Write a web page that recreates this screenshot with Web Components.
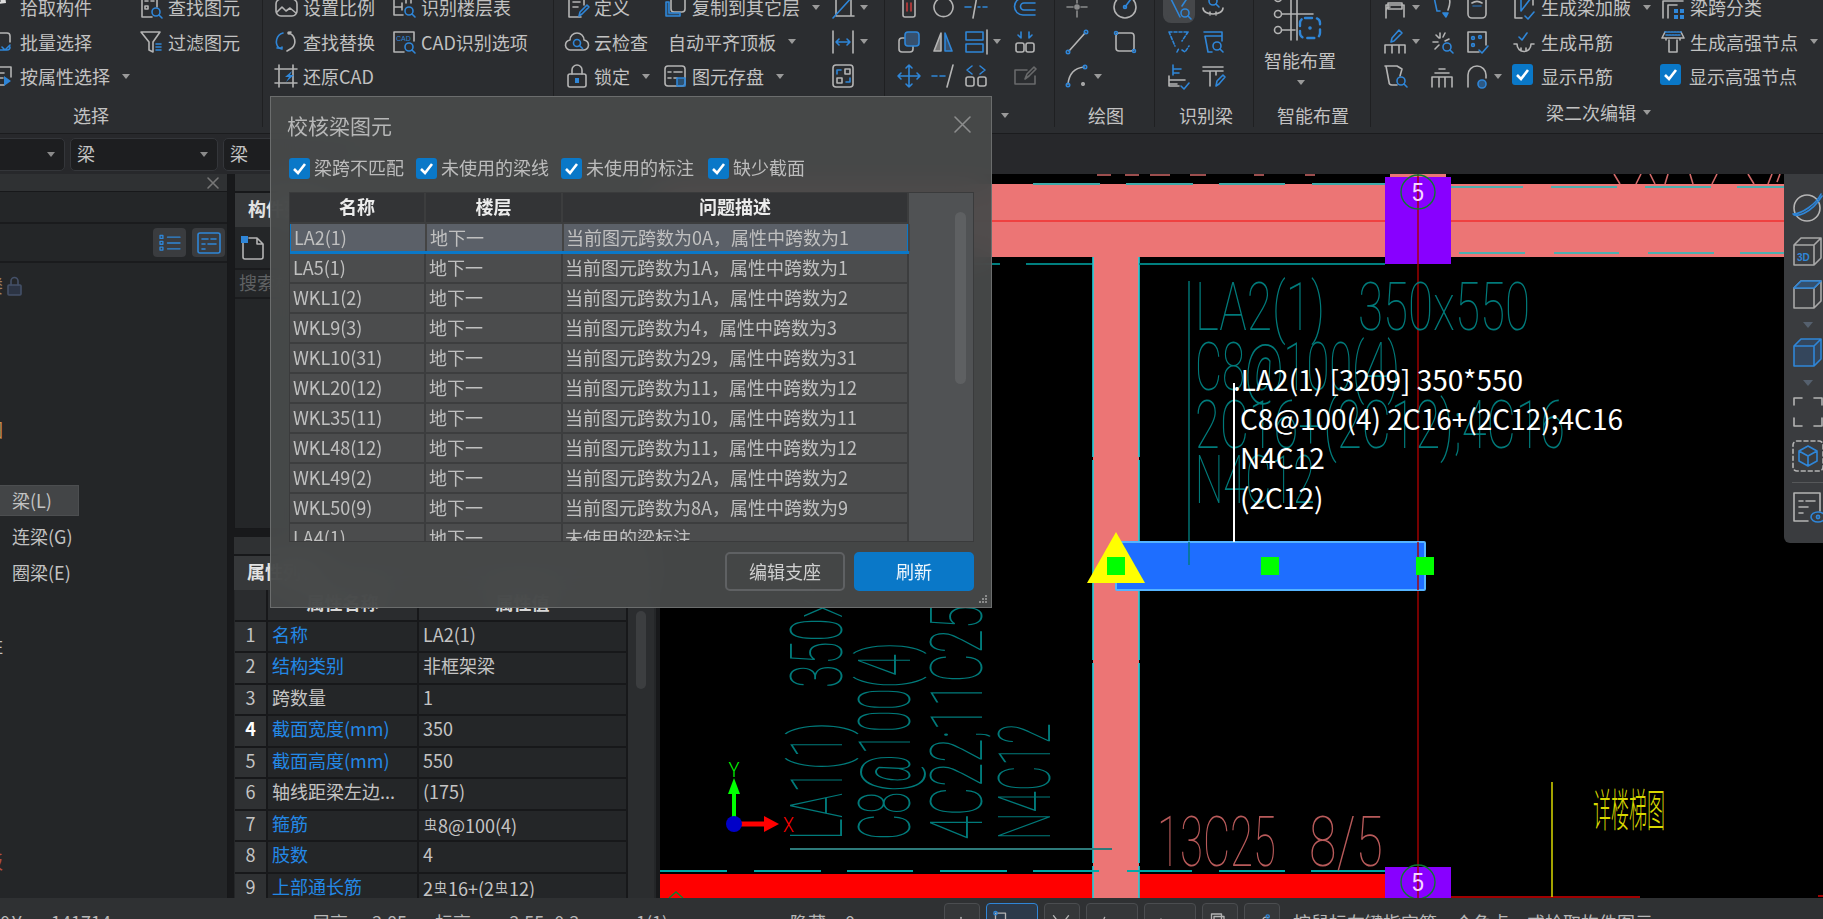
<!DOCTYPE html>
<html lang="zh">
<head>
<meta charset="utf-8">
<title>校核梁图元</title>
<style>
html,body{margin:0;padding:0}
body{width:1823px;height:919px;overflow:hidden;position:relative;display:flex;flex-direction:column;background:#18191b;color:#c4c4c4;font:18px "Noto Sans CJK SC","Liberation Sans",sans-serif}
.main{display:flex;height:724px}
.mid{display:flex;flex-direction:column;width:422px;margin-left:6px;margin-right:4px}
</style>
</head>
<body>
<gq-ribbon></gq-ribbon>
<gq-toolbar></gq-toolbar>
<div class="main">
  <gq-tree></gq-tree>
  <div class="mid">
    <gq-list-panel></gq-list-panel>
    <gq-prop-panel></gq-prop-panel>
  </div>
  <gq-canvas><gq-viewbar></gq-viewbar></gq-canvas>
</div>
<gq-status></gq-status>
<gq-dialog heading="校核梁图元">
  <gq-check slot="filters">梁跨不匹配</gq-check>
  <gq-check slot="filters">未使用的梁线</gq-check>
  <gq-check slot="filters">未使用的标注</gq-check>
  <gq-check slot="filters">缺少截面</gq-check>
  <gq-button slot="actions">编辑支座</gq-button>
  <gq-button slot="actions" primary>刷新</gq-button>
</gq-dialog>

<script>
const BLUE='#2f86d8';
const b=s=>`<g stroke="${BLUE}">${s}</g>`;
const mag=(x=17,y=17,r=4)=>b(`<circle cx="${x}" cy="${y}" r="${r}"/><path d="M${x+r-1} ${y+r-1}l3 3"/>`);
const svg=(s,w=24,h=24,vb='0 0 24 24')=>`<svg viewBox="${vb}" width="${w}" height="${h}" fill="none" stroke="#b4b4b4" stroke-width="1.6" stroke-linecap="round" stroke-linejoin="round" style="display:block;overflow:visible">${s}</svg>`;

// ribbon icons, one small drawing each
const ICONS={
  pick:`<path d="M2-4l8 8 4-4 1 8-8 1 3-3-8-8z" fill="#ddd" stroke="none"/>`,
  batch:`<path d="M9 3h7a3 3 0 0 1 3 3v6"/>`+b(`<path d="M9 20h7a3 3 0 0 0 3-3M11 17l3 3 5-5"/>`),
  attr:`<path d="M9 3h11v10M9 9h4M9 14h3M9 21h4"/>`+`<path d="M13 12l7 5-7 5z" fill="${BLUE}" stroke="none"/>`,
  find:`<path d="M13 22H3V2h15v10M6 6h3M12 6h3M6 11h3v3H6z"/>`+mag(),
  filter:`<path d="M2 2h19l-7 10v10l-4-2v-8z"/>`+b(`<path d="M17 14h5M17 17h5M17 20h5"/>`),
  scale:`<rect x="2" y="4" width="21" height="17" rx="5"/><path d="M3 17l5-5 4 4 4-3 6 5"/>`,
  floor:`<path d="M2 4h3M9 2h10v6M2 4v8h8V8M2 12v8h9M10 12v3M14 2v6"/>`+mag(17,16,4),
  replace:b(`<path d="M9 3a9 9 0 0 0-4 15l3 1"/><path d="M3 18h5v-1"/>`)+`<path d="M15 3a9 9 0 0 1 3 15l-5 3M15 3l2-1"/><circle cx="15" cy="3" r="1"/>`,
  cad:`<path d="M22 11V2H2v20h10"/><text x="4" y="11" font-size="7" fill="${BLUE}" stroke="none" style="font-family:'Liberation Sans',sans-serif">CAD</text>`+mag(17,17,4),
  restore:`<path d="M5 1v22M19 1v22M1 5h22M1 19h22"/>`+`<path d="M18 7l-7 6 4 0-3 5 8-7-4 0z" fill="${BLUE}" stroke="none"/>`,
  define:`<path d="M16 22H4V2h15v8M8 7h7M8 12h5"/>`+b(`<path d="M14 21l1-4 7-7 2 2-7 7z"/>`),
  cloud:`<path d="M6 20a5 5 0 0 1-1-10 7 7 0 0 1 14 0 5 5 0 0 1-1 10z"/>`+mag(12,13,3.5),
  lock:`<rect x="3" y="10" width="18" height="13" rx="2"/><path d="M7 10V6a5 5 0 0 1 10 0v4"/>`+`<rect x="10" y="14" width="4" height="5" fill="${BLUE}" stroke="none"/>`,
  copy:`<rect x="8" y="1" width="14" height="16" rx="3"/>`+b(`<path d="M6 7H3v14h14v-3H6z" fill="${BLUE}" fill-opacity=".35"/>`),
  diag:`<path d="M5 1v20h18M5 4h15v17" />`+b(`<path d="M2 23L22 1"/>`),
  dim:`<path d="M2 1v22M22 1v22"/>`+b(`<path d="M5 12h14M5 12l3-3M5 12l3 3M19 12l-3-3M19 12l-3 3"/>`),
  save:`<rect x="2" y="2" width="20" height="20" rx="3"/><path d="M5 8h3M5 14h3M11 8h8M11 14h3"/>`+b(`<rect x="14" y="14" width="8" height="8" fill="${BLUE}" fill-opacity=".4"/>`),
  swap:`<rect x="2" y="1" width="20" height="22" rx="3"/><rect x="14" y="5" width="5" height="5"/><rect x="6" y="14" width="5" height="5"/>`+b(`<path d="M6 10V6h4M19 14v4h-4"/>`),
  trash:`<path d="M4 3h16M6 3v17a2 2 0 0 0 2 2h8a2 2 0 0 0 2-2V3"/><path d="M10 8v8M14 8v8" stroke="#c43c3c"/>`,
  rotate:`<path d="M10 3a9.5 9.5 0 1 0 5 0"/>`+b(`<path d="M12 0v4"/>`),
  trim:`<path d="M13 1L9 23"/>`+b(`<path d="M1 12h6M14 12h2M19 12h4"/>`),
  offset:b(`<path d="M22 3H10a8 8 0 0 0 0 17h12M22 8H11a3 3 0 0 0 0 7h11"/>`),
  copy2:`<rect x="2" y="8" width="14" height="14" rx="3"/><rect x="8" y="2" width="14" height="14" rx="3" fill="#36506e" stroke="${BLUE}"/>`,
  mirror:`<path d="M10 3L3 21h7z" fill="#777"/><path d="M14 3l7 18h-7z" fill="#36506e" stroke="${BLUE}"/>`,
  align:b(`<rect x="2" y="2" width="17" height="8"/><rect x="2" y="14" width="17" height="8"/>`)+`<path d="M23 0v24"/>`,
  array:b(`<path d="M8 2v6M8 8L5 5M16 2v6M16 8l3-3"/>`)+`<rect x="3" y="13" width="8" height="9" rx="2"/><rect x="13" y="13" width="8" height="9" rx="2"/>`,
  move:b(`<path d="M12 1v22M1 12h22M12 1L9 4M12 1l3 3M12 23l-3-3M12 23l3-3M1 12l3-3M1 12l3 3M23 12l-3-3M23 12l-3 3"/>`),
  extend:b(`<path d="M1 12h5M9 12h5"/>`)+`<path d="M22 1L16 23"/>`,
  spread:b(`<path d="M8 2L3 6l5 4M16 2l5 4-5 4"/>`)+`<rect x="2" y="13" width="8" height="9" rx="2"/><rect x="14" y="13" width="8" height="9" rx="2"/>`,
  sketch:`<g opacity=".45"><path d="M22 12v8H2V6h12"/><path d="M12 15l2-5 7-7 2 2-7 7z"/></g>`,
  point:`<g opacity=".7"><path d="M12 2v6M12 16v6M2 12h6M16 12h6"/><circle cx="12" cy="12" r="2" fill="#b4b4b4"/></g>`,
  circlept:`<circle cx="12" cy="12" r="11"/>`+b(`<path d="M12 12l6-8"/><circle cx="12" cy="12" r="1.5"/>`),
  line:`<path d="M4 21L20 3"/>`+b(`<circle cx="3" cy="22" r="1.7"/><circle cx="21" cy="2" r="1.7"/>`),
  rect:`<rect x="3" y="3" width="18" height="18" rx="3"/>`+b(`<circle cx="3" cy="3" r="1.5"/><circle cx="21" cy="21" r="1.5"/>`),
  arc:`<path d="M3 20C4 10 10 4 19 3"/>`+b(`<circle cx="3" cy="21" r="1.7"/><circle cx="20" cy="3" r="1.7"/>`)+`<circle cx="18" cy="20" r="1.2"/>`,
  beamfind:b(`<path d="M3 2l10 20M3 2h18l-6 9"/>`)+mag(18,18,4),
  hook:`<path d="M2 13c0 8 20 8 20 0M9 17v3M15 17v3"/>`+mag(12,6,4),
  dashbeam:b(`<path d="M2 2h19M2 2l6 14M21 2l-6 9M10 22l2-4M15 20l3 2 4-6"/>`).replace('<path','<path stroke-dasharray="3 2"'),
  beammag:b(`<path d="M3 2h18v4H4l3 16M21 6v5M7 22h4"/>`)+mag(16,16,4),
  checklines:b(`<path d="M6 1v10M6 5h8M6 9h6M14 22l3 3 5-6"/>`)+`<path d="M2 16h16M2 12v10h10M2 20h8"/>`,
  tpen:`<path d="M2 3h20M2 7h20M9 7v15M15 7v4"/>`+b(`<path d="M15 22l1-5 6-6 2 2-6 7z"/>`),
  haunch:`<path d="M3 23V10M3 10h17M21 10v12M3 16a4 4 0 0 1 4-4"/>`+b(`<path d="M11-3v5M11-3h4"/>`)+`<path d="M5 8h14v6H5z"/>`,
  bulb:b(`<path d="M4 2l3 14h3"/><path d="M13 18h5l-2 4z" fill="${BLUE}"/>`)+`<path d="M18 2c3 3 2 8 0 13"/>`,
  capsule:`<rect x="3" y="1" width="18" height="22" rx="4"/><path d="M7 8c3-2 7-2 10 0"/>`+b(`<path d="M8 11h8" opacity=".6"/>`),
  pen:`<path d="M2 23v-8h20v8M9 15v8M16 15v8"/>`+b(`<path d="M8 12l1-4 7-8 3 3-8 8z"/>`),
  spark:`<path d="M3 12h5M10 3v5M15 3l-2 4M19 9l-4 2M6 5l3 3M5 19l4-4"/>`+mag(17,17,4),
  dots:`<path d="M3 2h18v13M3 2v20h11"/>`+b(`<circle cx="8" cy="8" r="1.4"/><circle cx="15" cy="7" r="1.4"/><circle cx="8" cy="15" r="1.4"/><path d="M14 20l3 3 6-7"/>`),
  bucket:`<path d="M2 2h12l5 3-2 7M3 2l3 16a3 3 0 0 0 3 3h5"/>`+mag(18,17,4),
  gate:`<path d="M2 23V13h20v10M9 13v10M15 13v10M5 9h14M9 5h6"/>`,
  arch:`<path d="M3 23V11a9 9 0 0 1 18 0v3"/>`+b(`<circle cx="17" cy="20" r="4" fill="${BLUE}" fill-opacity=".5"/>`),
  genhaunch:`<path d="M3 23V2h18M21 2v8M3 23h7"/>`+b(`<path d="M9 3v13l10-13M13 21l3 3 6-7"/>`),
  genhook:`<path d="M2 14h3c0 10 14 10 14 0h3M9 18v3M14 18v3"/>`+b(`<path d="M7 7l3 3 5-7"/>`),
  beamclass:`<path d="M2 23V6h20M7 23V10h9M2 3h20"/>`+b(`<path d="M13 14h4v4h-4zM19 14h4v4h-4zM13 20h4v4h-4zM19 20h4v4h-4z" fill="${BLUE}" stroke="none"/>`),
  genstrong:`<path d="M1 8h22M5 8v2M19 8v2M8 10v12h8V10M4 2l-3 6M20 2l3 6"/>`+b(`<path d="M4 2h16M5 5h14" stroke-dasharray="2 1"/>`)
};

const GROUPS=[
 {w:263,ml:-9,lx:73,label:'选择',rows:[
  [[148,'pick','拾取构件'],[0,'find','查找图元']],
  [[148,'batch','批量选择'],[0,'filter','过滤图元']],
  [[0,'attr','按属性选择',1]]]},
 {w:291,ml:11,rows:[
  [[118,'scale','设置比例'],[0,'floor','识别楼层表']],
  [[118,'replace','查找替换'],[0,'cad','CAD识别选项']],
  [[0,'restore','还原CAD']]]},
 {w:331,ml:11,rows:[
  [[98,'define','定义'],[168,'copy','复制到其它层',1],[0,'diag','',1]],
  [[98,'cloud','云检查'],[168,null,'自动平齐顶板',1],[0,'dim','',1]],
  [[98,'lock','锁定',1],[168,'save','图元存盘',1],[0,'swap','']]]},
 {w:170,ml:12,lx:109,labelCaret:1,rows:[
  [[34,'trash'],[33,'rotate'],[49,'trim'],[0,'offset']],
  [[34,'copy2'],[33,'mirror'],[49,'align','',1],[0,'array']],
  [[34,'move'],[33,'extend'],[49,'spread'],[0,'sketch']]]},
 {w:100,ml:10,lx:33,label:'绘图',rows:[
  [[48,'point'],[0,'circlept']],
  [[48,'line'],[0,'rect']],
  [[0,'arc','',1]]]},
 {w:99,ml:12,lx:24,label:'识别梁',rows:[
  [[34,'beamfind','',0,1],[0,'hook']],
  [[34,'dashbeam'],[0,'beammag']],
  [[34,'checklines'],[0,'tpen']]]},
 {w:117,big:1,lx:23,label:'智能布置'},
 {w:452,ml:12,lx:175,label:'梁二次编辑',labelCaret:1,labelUp:1,rows:[
  [[47,'haunch','',1],[35,'bulb'],[47,'capsule'],[149,'genhaunch','生成梁加腋',1],[0,'beamclass','梁跨分类']],
  [[47,'pen','',1],[35,'spark'],[47,'dots'],[149,'genhook','生成吊筋'],[0,'genstrong','生成高强节点',1]],
  [[47,'bucket'],[35,'gate'],[47,'arch','',1],[148,'#','显示吊筋'],[0,'#','显示高强节点']]]}
];

const CHECK=`<svg viewBox="0 0 21 21" width="21" height="21" style="display:block;flex:none"><rect width="21" height="21" rx="3" fill="#0a78c8"/><path d="M5 11l4 4 7-9" fill="none" stroke="#fff" stroke-width="2.6"/></svg>`;

class GqRibbon extends HTMLElement{
  connectedCallback(){
    const cell=([w,icon,text,caret,hl])=>{
      let ico='';
      if(icon==='#') ico=`<span class="ic">${CHECK}</span>`;
      else if(icon) ico=`<span class="ic ${hl?'hl':''}">${svg(ICONS[icon])}</span>`;
      const style=(w?`width:${w}px;flex:none;`:'')+(icon?'':'padding-left:5px;box-sizing:border-box;');
      return `<div class="cell" style="${style}">${ico}${text?`<span>${text}</span>`:''}${caret?`<i class="${text?'tc':''}"></i>`:''}</div>`;
    };
    const group=g=>{
      const lab=(g.label||g.labelCaret)?`<div class="lab ${g.labelUp?'up':''}" style="padding-left:${g.lx}px">${g.label||''}${g.labelCaret?'<i class="tc"></i>':''}</div>`:'<div class="lab"></div>';
      const body=g.big?`<div class="big">
        <div class="bigic">${svg(`<path d="M19 2v48M25 2v48M9 8h32M9 24h32M9 40h14"/><g fill="#2b2d30"><circle cx="6" cy="8" r="3.5"/><circle cx="6" cy="24" r="3.5"/><circle cx="6" cy="40" r="3.5"/></g>`+b(`<rect x="28" y="28" width="20" height="20" rx="5" stroke-width="2.4" stroke-dasharray="7 5"/><circle cx="38" cy="38" r="1"/>`),54,54,'0 0 54 54')}</div>
        <div class="bigt">智能布置</div><i class="bigc"></i></div>`
        :`<div class="rows" style="margin-left:${g.ml}px">${g.rows.map(r=>`<div class="row">${r.map(cell).join('')}</div>`).join('')}</div>`;
      return `<section style="width:${g.w}px">${body}${lab}</section>`;
    };
    this.attachShadow({mode:'open'}).innerHTML=`<style>
      :host{display:flex;height:133px;flex:none;background:#2b2d30;border-bottom:1px solid #1b1c1e;overflow:hidden;color:#c2c2c2}
      section{box-sizing:border-box;height:127px;border-right:1px solid #1f2022;flex:none;display:flex;flex-direction:column}
      section:last-child{border-right:0}
      .rows{margin-top:-10px;height:104px}
      .row{height:34.5px;display:flex;align-items:center;white-space:nowrap}
      .cell{display:flex;align-items:center;gap:5px;height:100%}
      .ic{width:24px;height:24px;flex:none;border-radius:4px}
      .hl{background:#45474a;box-shadow:0 0 0 4px #45474a}
      i{width:0;height:0;border:4.5px solid transparent;border-top:5px solid #9a9a9a;border-bottom:0;flex:none;display:inline-block}
      i.tc{margin-left:7px}
      .lab{height:23px;margin-top:10px;line-height:23px;white-space:nowrap;display:flex;align-items:center}
      .lab.up{margin-top:7px}
      .big{height:104px;margin-top:-10px;display:flex;flex-direction:column;align-items:flex-start}
      .bigic{margin-left:18px;height:54px}
      .bigt{margin-left:10px;line-height:24px;margin-top:4px}
      .bigc{margin-left:43px;margin-top:8px}
    </style>${GROUPS.map(group).join('')}`;
  }
}
customElements.define('gq-ribbon',GqRibbon);

class GqCombo extends HTMLElement{
  connectedCallback(){
    this.attachShadow({mode:'open'}).innerHTML=`<style>
      :host{display:flex;align-items:center;justify-content:space-between;box-sizing:border-box;height:33px;padding:0 9px 0 6px;background:#1d1e20;border:1px solid #34363a;border-radius:5px;flex:none}
      span{padding-bottom:2px}
      i{width:0;height:0;border:4px solid transparent;border-top:5px solid #8a8a8a;border-bottom:0}
    </style><span><slot></slot></span><i></i>`;
  }
}
customElements.define('gq-combo',GqCombo);

class GqToolbar extends HTMLElement{
  connectedCallback(){
    this.attachShadow({mode:'open'}).innerHTML=`<style>
      :host{display:flex;align-items:center;gap:5px;height:40px;flex:none;background:#27282b;margin-left:-5px}
    </style>
    <gq-combo style="width:70px"></gq-combo>
    <gq-combo style="width:148px">梁</gq-combo>
    <gq-combo style="width:150px">梁</gq-combo>`;
  }
}
customElements.define('gq-toolbar',GqToolbar);

class GqTree extends HTMLElement{
  connectedCallback(){
    this.attachShadow({mode:'open'}).innerHTML=`<style>
      :host{display:flex;flex-direction:column;width:228px;flex:none;background:#242628;overflow:hidden;box-sizing:border-box;border-right:1px solid #17181a}
      .head{height:17px;background:#2f3133;display:flex;justify-content:flex-end;align-items:center;padding-right:8px;border-bottom:1px solid #17181a}
      .blank{height:30px;border-bottom:2px solid #1a1b1d}
      .tools{height:37px;display:flex;justify-content:flex-end;align-items:center;gap:6px;padding-right:2px;border-bottom:2px solid #1a1b1d;flex:none}
      .btn{width:33px;height:29px;background:#3a3c3f;border-radius:4px;display:flex;align-items:center;justify-content:center}
      .it{line-height:29px;height:31px;white-space:nowrap;padding-left:12px;color:#c2c2c2;flex:none}
      .cut{margin-left:-15px;padding-left:0;display:flex;align-items:center;gap:4px}
      .sel{background:#434547;border:1px solid #4c4e50;border-left:0;box-sizing:border-box;width:79px}
      .tall{height:36px;line-height:36px}
    </style>
    <div class="head">${svg(`<path d="M1 1l10 10M11 1L1 11" stroke="#777"/>`,12,12,'0 0 12 12')}</div>
    <div class="blank"></div>
    <div class="tools">
      <div class="btn">${svg(b(`<path d="M9 5h15M9 12h15M9 19h15"/><rect x="0" y="3" width="3.5" height="3.5"/><rect x="0" y="10" width="3.5" height="3.5"/><rect x="0" y="17" width="3.5" height="3.5"/>`),24,20)}</div>
      <div class="btn">${svg(b(`<rect x="1" y="1" width="22" height="20" rx="2"/><path d="M5 7h6M14 7h5M5 12h3M11 12h8M5 17h3"/>`),24,22,'0 0 24 22')}</div>
    </div>
    <div class="it cut" style="margin-top:9px;height:27px;line-height:25px"><span style="color:#a08060">楼</span>${svg(`<g stroke="#445068"><rect x="1" y="8" width="13" height="10" rx="1" fill="#2c3444"/><path d="M4 8V4a3.5 3.5 0 0 1 7 0v4"/></g>`,15,18,'0 0 15 18')}</div>
    <div class="it cut" style="margin-top:115px;color:#c89050">图</div>
    <div class="it sel" style="margin-top:40px">梁(L)</div>
    <div class="it tall" style="margin-top:2px">连梁(G)</div>
    <div class="it tall">圈梁(E)</div>
    <div class="it cut" style="margin-top:40px">柱</div>
    <div class="it cut" style="margin-top:185px;color:#b05040">板</div>`;
  }
}
customElements.define('gq-tree',GqTree);

class GqPanelHead extends HTMLElement{
  connectedCallback(){
    this.attachShadow({mode:'open'}).innerHTML=`<style>
      :host{display:block;flex:none}
      .strip{height:17px;background:#2f3133;border-bottom:2px solid #17181a}
      .tab{height:34px;line-height:30px;background:#36383a;padding-left:13px;font-weight:700;color:#e2e2e2}
    </style><div class="strip"></div><div class="tab"><slot></slot></div>`;
  }
}
customElements.define('gq-panel-head',GqPanelHead);

class GqListPanel extends HTMLElement{
  connectedCallback(){
    this.attachShadow({mode:'open'}).innerHTML=`<style>
      :host{display:flex;flex-direction:column;height:355px;flex:none;background:#242628;box-sizing:border-box;border:1px solid #17181a;border-top:0}
      .tools{height:41px;flex:none;padding-left:6px;display:flex;align-items:center;border-bottom:2px solid #1a1b1d}
      .search{height:27px;line-height:25px;flex:none;padding-left:4px;color:#5f6163;border-bottom:2px solid #1a1b1d}
    </style>
    <gq-panel-head>构件列表</gq-panel-head>
    <div class="tools">${svg(`<path d="M2 6v15a2 2 0 0 0 2 2h16a2 2 0 0 0 2-2V8l-6-6H8M16 2v6h6"/><rect x="0" y="0" width="7" height="7" fill="${BLUE}" stroke="none"/>`)}</div>
    <div class="search">搜索构件...</div>`;
  }
}
customElements.define('gq-list-panel',GqListPanel);

const REBAR='<b class="r">虫</b>';
const PROPS=[['名称','LA2(1)',1],['结构类别','非框架梁',1],['跨数量','1',0],['截面宽度(mm)','350',1,1],['截面高度(mm)','550',1],['轴线距梁左边...','(175)',0],['箍筋',REBAR+'8@100(4)',1],['肢数','4',1],['上部通长筋','2'+REBAR+'16+(2'+REBAR+'12)',1]];
class GqPropPanel extends HTMLElement{
  connectedCallback(){
    const rows=PROPS.map((p,i)=>`<div class="n ${p[3]?'cur':''}">${i+1}</div><div class="k ${p[2]?'blue':''}">${p[0]}</div><div class="v">${p[1]}</div>`).join('');
    this.attachShadow({mode:'open'}).innerHTML=`<style>
      :host{display:flex;flex-direction:column;margin-top:8px;height:361px;flex:none;background:#242628;box-sizing:border-box;overflow:hidden;position:relative}
      .wrap{display:flex;flex:1;min-height:0;padding-left:1px}
      .g{display:grid;grid-template-columns:33px 151px 209px;grid-auto-rows:31.5px;flex:none}
      .g>div{border:solid #17181a;border-width:0 2px 2px 0;box-sizing:border-box;white-space:nowrap;line-height:25px;padding-left:4px}
      .hd{text-align:center;font-weight:700;color:#d8d8d8;background:#2a2c2e;padding-left:0!important}
      .n{background:#2f3133;text-align:center;padding-left:0!important}
      .cur{font-weight:700;color:#fff}
      .blue{color:#2388e6}
      .r{font-size:13px;font-weight:400;vertical-align:4px;margin:0 1px}
      .sb{width:26px;flex:none;background:#2b2d2f;padding-top:21px;box-sizing:border-box}
      .th{width:10px;height:78px;margin-left:8px;background:#3c3e40;border-radius:5px}
    </style>
    <gq-panel-head>属性列表</gq-panel-head>
    <div class="wrap">
      <div class="g"><div class="hd"></div><div class="hd">属性名称</div><div class="hd">属性值</div>${rows}</div>
      <div class="sb"><div class="th"></div></div>
    </div>`;
  }
}
customElements.define('gq-prop-panel',GqPropPanel);

class GqCanvas extends HTMLElement{
  connectedCallback(){
    const T='#007a7a';
    const dash=(y,c,w,list)=>list.map(([a,z])=>`<path d="M${a} ${y}H${z}" stroke="${c}" stroke-width="${w}"/>`).join('');
    // CAD annotations: squeezed thin type set to a fixed length
    const cad=(s,x,y,fs,len,c,rot)=>`<text ${rot?`transform="translate(${x} ${y}) rotate(-90)"`:`x="${x}" y="${y}"`} font-size="${fs}" textLength="${len}" lengthAdjust="spacingAndGlyphs" fill="${c}">${s}</text>`;
    const bubble=(y)=>`<ellipse cx="1418" cy="${y}" rx="17" ry="17" fill="none" stroke="#0d7a30" stroke-width="1.4"/><text x="1418" y="${y+9}" text-anchor="middle" font-size="25" style="font-family:'Liberation Sans',sans-serif;font-weight:400" fill="#f8d8ff" textLength="12" lengthAdjust="spacingAndGlyphs">5</text>`;
    const sq=x=>`<rect x="${x-9}" y="557" width="18" height="18" fill="#00ff00"/>`;
    this.attachShadow({mode:'open'}).innerHTML=`<style>
      :host{display:block;position:relative;flex:1;background:#000;overflow:hidden}
      svg{display:block}
      text{font-family:Roboto,"Liberation Sans",sans-serif;font-weight:100}
      .wt{font-family:"Noto Sans CJK SC","Liberation Sans",sans-serif;font-weight:400}
      ::slotted(*){position:absolute;top:0;right:0}
    </style>
    <svg width="1163" height="724" viewBox="660 174 1163 724">
      <rect x="660" y="874" width="725" height="24" fill="#ff0000"/>
      <rect x="660" y="184" width="1163" height="73" fill="#ec7575"/>
      <rect x="1093" y="257" width="46" height="641" fill="#ec7575"/>
      <path d="M1093 257V898M1139 257V898" stroke="#1fd0dc" stroke-width="1.6" stroke-dasharray="200 3"/>
      <path d="M660 221H1823" stroke="#f03030" stroke-width="1.6"/>
      ${dash(184,'#3fa9a9',2,[[1033,1100],[1126,1193],[1219,1285],[1312,1385]])}
      ${dash(187,'#4bb0b0',2,[[1451,1523],[1551,1617],[1645,1711],[1737,1785]])}
      ${dash(253,'#4bb0b0',2,[[1459,1525],[1554,1619],[1648,1714],[1740,1785]])}
      ${dash(264,'#007f7f',2,[[660,1000],[1026,1092],[1139,1385]])}
      ${dash(871,'#00a8a8',2,[[660,727],[754,821],[847,913],[940,1007],[1033,1099],[1127,1192],[1219,1285],[1311,1385]])}
      <path d="M790 849H1112" stroke="#2d7a7a" stroke-width="2"/>
      <rect x="1385" y="177" width="66" height="87" fill="#8800ff"/>
      <rect x="1390" y="174" width="56" height="3" fill="#ec7575"/>
      <rect x="1385" y="867" width="66" height="31" fill="#8800ff"/>
      <path d="M1418 174V898" stroke="#a80000" stroke-width="1.4"/>
      <path d="M1451 897H1640M1818 896H1823" stroke="#a00000" stroke-width="2"/>
      ${bubble(192)}${bubble(882)}
      <path d="M1189 281V565" stroke="${T}" stroke-width="1.4"/>
      ${cad('LA2(1)',1195,330,67,130,T)}
      ${cad('350x550',1358,330,67,172,T)}
      ${cad('C8@100(4)',1195,390,67,205,T)}
      ${cad('2C16+(2C12);4C16',1195,448,67,370,T)}
      ${cad('N4C12',1195,503,67,120,T)}
      ${cad('LA1(1)',842,840,72,118,T,1)}
      ${cad('350x550',842,688,72,160,T,1)}
      ${cad('C8@100(4)',910,840,72,198,T,1)}
      ${cad('4C22;11C25',982,840,72,235,T,1)}
      ${cad('N4C12',1050,840,72,117,T,1)}
      ${cad('13C25',1157,866,70,119,'#b85a5a')}
      ${cad('8/5',1309,866,70,74,'#b85a5a')}
      <path d="M1552 782V897" stroke="#e8e800" stroke-width="1.4"/>
      <text class="wt" transform="translate(1593 827) scale(.88 2.2)" font-size="20.5" fill="#d8d800" style="font-weight:300">详楼梯图</text>
      <path d="M1097 175h14M1125 175h14M1150 175h20M1190 175h16M1254 175h10M1305 175h10M1614 174l6 10M1636 184l5-10M1650 174l5 10M1668 174l-3 10M1690 174l3 10M1712 184l5-10M1748 174l6 10M1768 184l4-10M1780 174l-3 8" stroke="#d06868" stroke-width="1.6"/>
      <path d="M669 898l7-6 7 6" stroke="#0d8030" fill="none" stroke-width="1.4"/>

      <rect x="1116" y="542" width="309" height="48" rx="1" fill="#1e6eff" stroke="#55b4ff" stroke-width="2"/>
      <path d="M1116 532l29 51h-58z" fill="#ffff00"/>
      <path d="M1234 383V542" stroke="#fff" stroke-width="2"/>
      <path d="M1189 542V565" stroke="${T}" stroke-width="1.4"/>
      <path d="M1418 542V590" stroke="#a80000" stroke-width="1.4"/>
      ${sq(1116)}${sq(1270)}${sq(1425)}
      <g fill="#fff" font-size="28">
        <text class="wt" x="1233" y="391">.LA2(1) [3209] 350*550</text>
        <text class="wt" x="1240" y="430">C8@100(4) 2C16+(2C12);4C16</text>
        <text class="wt" x="1240" y="469">N4C12</text>
        <text class="wt" x="1240" y="509">(2C12)</text>
      </g>

      <path d="M734 824V790" stroke="#00ff00" stroke-width="4"/><path d="M734 778l6 16h-12z" fill="#00ff00"/>
      <path d="M734 824H766" stroke="#ff0000" stroke-width="5"/><path d="M779 824l-15 -8v16z" fill="#ff0000"/>
      <ellipse cx="734" cy="824" rx="8" ry="8" fill="#0000c8"/>
      <text x="734" y="777" text-anchor="middle" font-size="20" textLength="11" lengthAdjust="spacingAndGlyphs" fill="#00ff00" style="font-weight:300">Y</text>
      <text x="783" y="832" font-size="20" textLength="11" lengthAdjust="spacingAndGlyphs" fill="#ff0000" style="font-weight:300">X</text>
    </svg><slot></slot>`;
  }
}
customElements.define('gq-canvas',GqCanvas);

class GqViewbar extends HTMLElement{
  connectedCallback(){
    const G='#a8a8a8';
    const cube=(top,body='')=>`<path d="M2 9h20v20H2zM2 9l7-7h20v20l-7 7M22 9l7-7" stroke="${G}"/>${body}`;
    const item=(mt,s)=>`<div style="margin-top:${mt}px;height:32px">${svg(s,32,32,'0 0 32 32')}</div>`;
    const tri=mt=>`<div class="t" style="margin-top:${mt}px"></div>`;
    this.attachShadow({mode:'open'}).innerHTML=`<style>
      :host{display:block;width:39px;height:369px;background:#3a3c3f;border-radius:0 0 0 6px;box-sizing:border-box;padding-left:8px;overflow:hidden}
      .t{width:0;height:0;border:5px solid transparent;border-top:6px solid #55606e;border-bottom:0;margin-left:11px;height:0}
      .s{height:1px;background:#56585a;margin-top:10px;margin-left:0;width:40px}
    </style>
    ${item(18,`<circle cx="15" cy="16" r="13"/>`+b(`<path d="M1 22C10 22 24 12 29 2M1 22c2 4 18 0 29-18"/>`))}
    ${item(12,cube(0,`<text x="5" y="25" font-size="10" font-weight="700" fill="${BLUE}" stroke="none" style="font-family:'Liberation Sans',sans-serif">3D</text>`))}
    ${item(11,cube(0,`<path d="M2 9l7-7h20l-7 7z" stroke="${BLUE}" fill="#34506e"/>`))}
    ${tri(11)}
    ${item(9,`<path d="M2 9h20v20H2zM2 9l7-7h20v20l-7 7M22 9l7-7z" stroke="${BLUE}" fill="#34465c"/>`)}
    ${tri(11)}
    ${item(10,`<path d="M2 9V2h8M22 2h8v7M2 22v8h8M22 30h8v-8"/>`)}
    ${item(12,`<rect x="1" y="1" width="30" height="30" rx="4" stroke-dasharray="4 3"/>`+b(`<path d="M16 6l9 5v10l-9 5-9-5V11zM7 11l9 5 9-5M16 16v10"/>`))}
    <div class="s"></div>
    ${item(8,`<path d="M28 20V2H2v28h14M7 10h4M14 10h9M7 16h9M7 22h4"/>`+b(`<ellipse cx="26" cy="26" rx="7" ry="5"/><circle cx="26" cy="26" r="1.6"/>`))}`;
  }
}
customElements.define('gq-viewbar',GqViewbar);

class GqStatus extends HTMLElement{
  connectedCallback(){
    const sp=(w,t)=>`<span style="width:${w}px">${t}</span>`;
    const btn=(w,s,on)=>`<span class="b ${on?'on':''}" style="width:${w}px">${s?svg(s,20,20):''}</span>`;
    this.attachShadow({mode:'open'}).innerHTML=`<style>
      :host{display:flex;height:21px;flex:none;background:#2f3133;overflow:hidden;white-space:nowrap;border-top:0;color:#b8b8b8;padding-top:0}
      span{flex:none;display:block;line-height:26px;padding-top:11px}
      .b{box-sizing:border-box;height:30px;padding:5px 0 0 6px;margin-top:5px;margin-right:6px;border:1px solid #4b4d50;border-radius:4px;background:#353739}
      .b.on{border-color:${BLUE};background:#2c3a4a}
    </style>
    ${sp(12,'0')}${sp(39,'Y:')}${sp(261,'141714')}${sp(60,'层高')}${sp(63,'3.85')}${sp(68,'标高')}${sp(133,'-3.55~0.3')}${sp(154,'1(1)')}${sp(55,'隐藏')}${sp(99,'0')}
    ${btn(36,'<path d="M12 10v14"/>')}${btn(52,'<path d="M3 20V5h12v15"/>'+b('<circle cx="3" cy="5" r="2"/>'),1)}${btn(36,'<path d="M3 8l9 12 9-12"/>')}${btn(52,'<path d="M14 10l-6 14"/>')}${btn(52,'<path d="M8 16h8M12 12v8"/>')}${btn(36,'<rect x="3" y="6" width="12" height="16"/><rect x="6" y="9" width="12" height="16"/>')}${btn(36,'<path d="M3 20h5l8-10h5"/>'+b('<circle cx="3" cy="20" r="2"/><circle cx="20" cy="9" r="2"/>'))}
    <span style="margin-left:7px">按鼠标左键指定第一个角点，或拾取构件图元</span>`;
  }
}
customElements.define('gq-status',GqStatus);

class GqCheck extends HTMLElement{
  connectedCallback(){
    this.attachShadow({mode:'open'}).innerHTML=`<style>
      :host{display:flex;align-items:center;gap:4px;color:#bcbcbc;white-space:nowrap}
      span{padding-bottom:2px}
    </style>${CHECK}<span><slot></slot></span>`;
  }
}
customElements.define('gq-check',GqCheck);

class GqButton extends HTMLElement{
  connectedCallback(){
    this.attachShadow({mode:'open'}).innerHTML=`<style>
      :host{display:flex;align-items:center;justify-content:center;box-sizing:border-box;width:120px;height:39px;border-radius:5px;border:2px solid #5f6163;color:#d0d0d0;padding-bottom:2px}
      :host([primary]){background:#0a78c8;border-color:#0a78c8;color:#eef6fc}
    </style><slot></slot>`;
  }
}
customElements.define('gq-button',GqButton);

const ISSUES=[['LA2(1)','当前图元跨数为0A，属性中跨数为1'],['LA5(1)','当前图元跨数为1A，属性中跨数为1'],['WKL1(2)','当前图元跨数为1A，属性中跨数为2'],['WKL9(3)','当前图元跨数为4，属性中跨数为3'],['WKL10(31)','当前图元跨数为29，属性中跨数为31'],['WKL20(12)','当前图元跨数为11，属性中跨数为12'],['WKL35(11)','当前图元跨数为10，属性中跨数为11'],['WKL48(12)','当前图元跨数为11，属性中跨数为12'],['WKL49(2)','当前图元跨数为2A，属性中跨数为2'],['WKL50(9)','当前图元跨数为8A，属性中跨数为9'],['LA4(1)','未使用的梁标注']];
class GqDialog extends HTMLElement{
  connectedCallback(){
    const rows=ISSUES.map((r,i)=>`<div class="r ${i?'':'sel'}"><div>${r[0]}</div><div>地下一</div><div>${r[1]}</div></div>`).join('');
    this.attachShadow({mode:'open'}).innerHTML=`<style>
      :host{position:absolute;left:270px;top:96px;width:722px;height:512px;box-sizing:border-box;border:1px solid #6b6d6d;background:rgba(72,74,74,.95);backdrop-filter:blur(16px);display:flex;flex-direction:column;padding:0 18px 0 18px;color:#c0c0c0;overflow:hidden}
      .title{height:55px;flex:none;display:flex;align-items:center;justify-content:space-between;font-size:21px;color:#b6b7b7;padding:0 2px 0 0;margin-left:-2px}
      .filters{height:32px;flex:none;display:flex;align-items:center}
      ::slotted(gq-check:nth-child(1)){width:127px}
      ::slotted(gq-check:nth-child(2)){width:145px}
      ::slotted(gq-check:nth-child(3)){width:147px}
      .tb{height:350px;flex:none;display:flex;background:#505254;overflow:hidden;border:1px solid #3a3b3c;box-sizing:border-box;width:685px;margin-top:8px}
      .grid{width:619px;flex:none}
      .r{display:grid;grid-template-columns:136px 137px 346px;height:30px;line-height:26px;white-space:nowrap;background:#4b4c4d;box-sizing:border-box;border-bottom:2px solid #3c3d3e}
      .r>div{padding-left:3px;border-right:2px solid #3c3d3e;overflow:hidden}
      .r>div+div{padding-left:3px}
      .r>div+div+div{padding-left:2px}
      .h{background:#333436;font-weight:700;color:#ececec;text-align:center;height:31px;line-height:27px}
      .h>div,.h>div+div,.h>div+div+div{padding-left:0}
      .sel{background:#5b6068;border:solid #0a78c8;border-width:0 2px 3px 1px}
      .sel>div{border-right-color:#444}
      .sb{flex:1;position:relative}
      .th{position:absolute;left:46px;top:19px;width:11px;height:172px;background:#5e6062;border-radius:6px}
      .actions{flex:none;display:flex;justify-content:flex-end;gap:9px;margin-top:10px;margin-right:0;width:685px}
      .grip{position:absolute;right:3px;bottom:3px}
    </style>
    <div class="title"><span>${this.getAttribute('heading')}</span>${svg(`<path d="M1 1l15 15M16 1L1 16" stroke="#8c8d8d"/>`,17,17,'0 0 17 17')}</div>
    <div class="filters"><slot name="filters"></slot></div>
    <div class="tb">
      <div class="grid">
        <div class="r h"><div>名称</div><div>楼层</div><div>问题描述</div></div>
        ${rows}
      </div>
      <div class="sb"><div class="th"></div></div>
    </div>
    <div class="actions"><slot name="actions"></slot></div>
    <svg class="grip" width="10" height="10" viewBox="0 0 10 10" fill="#8a8b8b"><rect x="7" y="1" width="2" height="2"/><rect x="4" y="4" width="2" height="2"/><rect x="7" y="4" width="2" height="2"/><rect x="1" y="7" width="2" height="2"/><rect x="4" y="7" width="2" height="2"/><rect x="7" y="7" width="2" height="2"/></svg>`;
  }
}
customElements.define('gq-dialog',GqDialog);
</script>
</body>
</html>
